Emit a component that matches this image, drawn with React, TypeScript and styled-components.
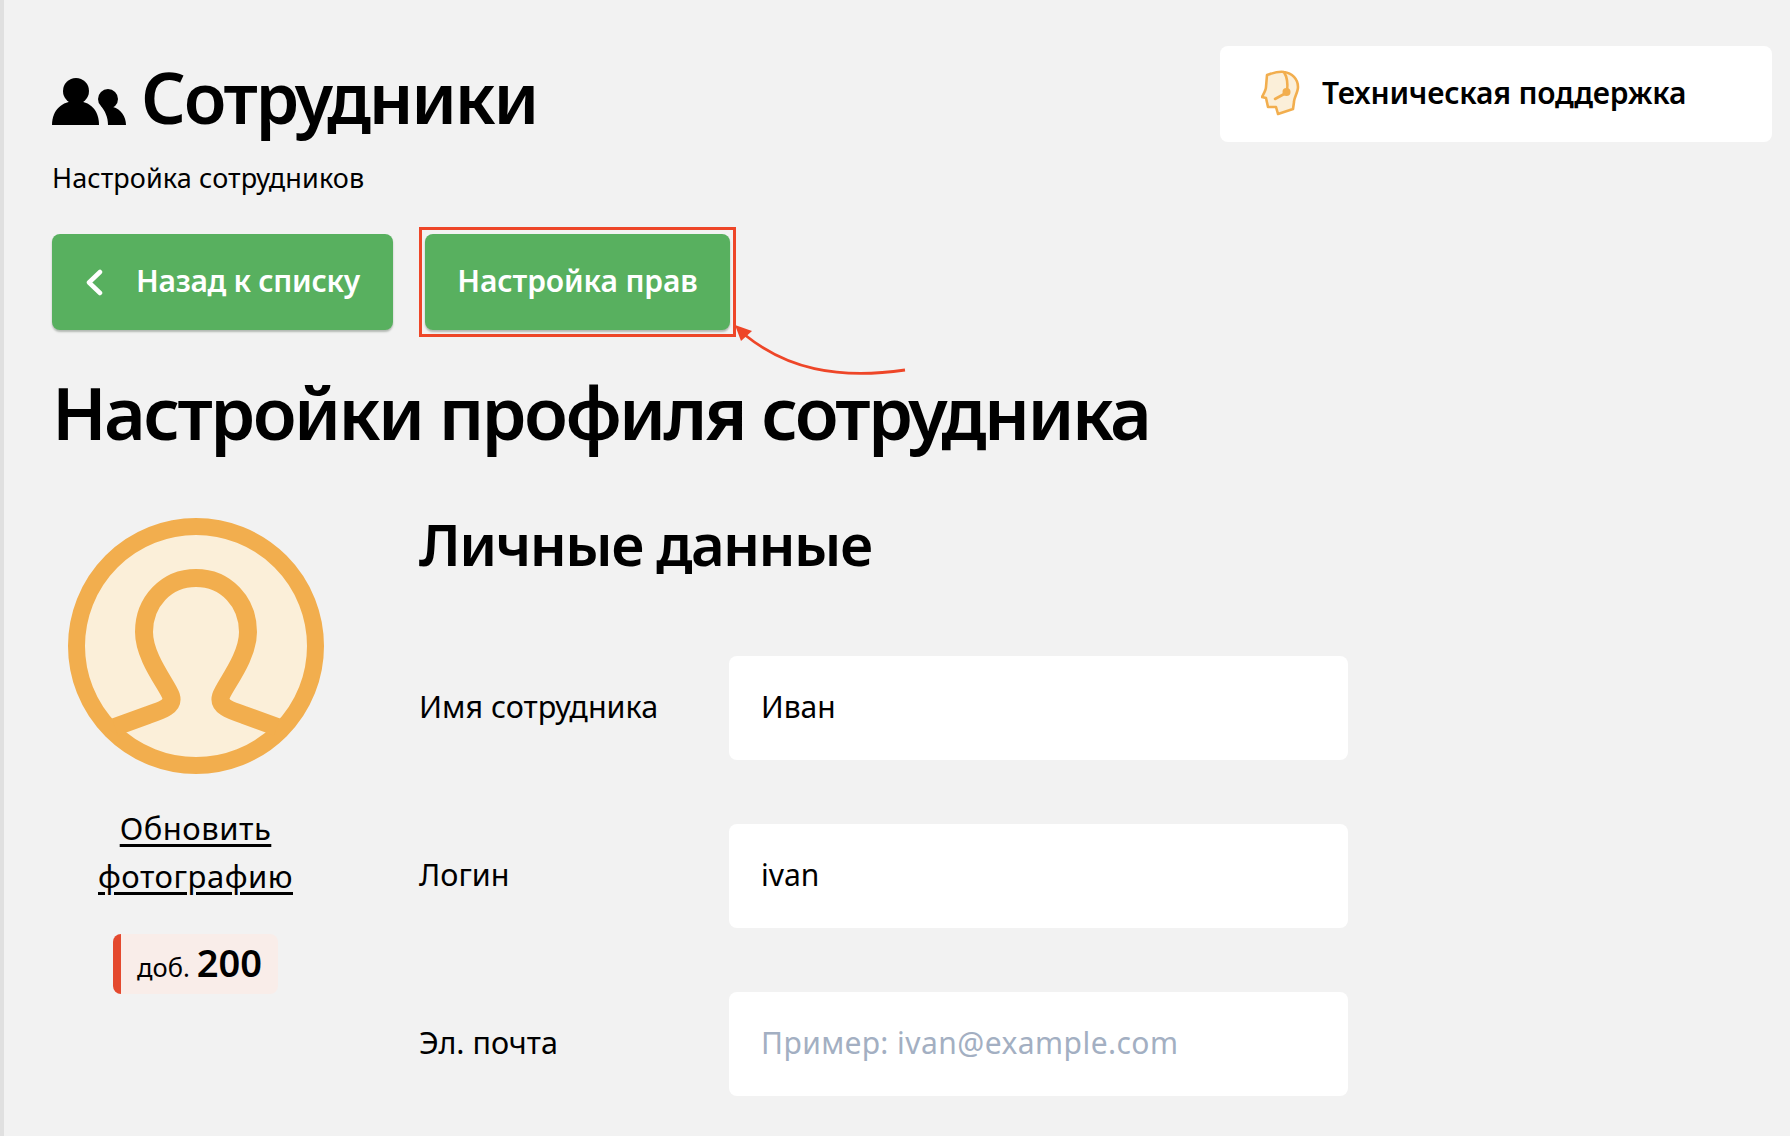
import React from 'react';
import styled, {createGlobalStyle} from 'styled-components';

const GlobalStyle = createGlobalStyle`
	html, body {
		margin:0;
		padding:0;
		background:#f2f2f2;
	}
	body {
		font-family:"Noto Sans", "Open Sans", Arial, sans-serif;
		color:#000;
	}
	* {
		box-sizing:border-box;
	}
`;

const Page = styled.div`
	height:1136px;
	overflow:hidden;
	border-left:4px solid #e0e0e0;
	padding:0 18px 0 48px;
`;

const Header = styled.header`
	display:flex;
	justify-content:space-between;
	align-items:flex-start;
`;

const TitleBlock = styled.div`
	padding-top:60px;
`;

const TitleRow = styled.div`
	display:flex;
	align-items:center;
	gap:15px;
	height:80px;
`;

const Title = styled.h2`
	margin:0;
	padding-bottom:6px;
	font-size:70px;
	font-weight:600;
	line-height:80px;
	letter-spacing:-2.3px;
`;

const Subtitle = styled.div`
	margin-top:20px;
	font-size:27px;
	line-height:36px;
	letter-spacing:0.1px;
`;

const SupportCard = styled.a`
	display:flex;
	align-items:center;
	width:552px;
	height:96px;
	margin-top:46px;
	padding-left:41px;
	gap:21px;
	background:#fff;
	border-radius:8px;
	font-size:30px;
	font-weight:600;
	letter-spacing:-0.2px;
`;

const SupportText = styled.span`
	padding-bottom:4px;
`;

const Buttons = styled.div`
	display:flex;
	gap:32px;
	margin-top:38px;
`;

const Button = styled.button<{wide?:boolean}>`
	position:relative;
	display:flex;
	align-items:center;
	height:96px;
	width:${props => props.wide ? '305px' : '341px'};
	justify-content:${props => props.wide ? 'center' : 'flex-start'};
	padding:0 ${props => props.wide ? '0' : '0 0 33px'};
	gap:33px;
	border:0;
	border-radius:8px;
	background:#58b05f;
	box-shadow:0 2px 2px #b3b9b3;
	color:#fff;
	font-family:inherit;
	font-size:30px;
	font-weight:600;
	letter-spacing:${props => props.wide ? '-0.1px' : '-0.3px'};
`;

const ButtonText = styled.span`
	padding-bottom:4px;
`;

const Highlight = styled.span`
	position:absolute;
	top:-7px;
	left:-6px;
	right:-6px;
	bottom:-7px;
	border:3px solid #ee4628;
`;

const Arrow = styled.svg`
	position:absolute;
	top:92px;
	left:306px;
	overflow:visible;
`;

const Heading = styled.h1`
	margin:37px 0 0;
	font-size:72px;
	font-weight:600;
	line-height:90px;
	letter-spacing:-2.6px;
`;

const Content = styled.div`
	display:flex;
	gap:80px;
	margin-top:48px;
`;

const AvatarColumn = styled.div`
	display:flex;
	flex-direction:column;
	align-items:center;
	width:287px;
	padding-top:13px;
`;

const PhotoLink = styled.a`
	margin-top:30px;
	width:240px;
	font-size:31px;
	line-height:48px;
	letter-spacing:0.5px;
	text-align:center;
	text-decoration:underline;
	text-underline-offset:4px;
`;

const Extension = styled.div`
	display:flex;
	align-items:baseline;
	gap:7px;
	height:60px;
	margin-top:34px;
	padding:6px 16px 0 16px;
	border-left:8px solid #e4492e;
	border-radius:8px;
	background:#f9ede9;
	font-size:25.5px;
`;

const ExtensionNumber = styled.b`
	font-size:38px;
	line-height:44px;
	font-weight:600;
`;

const Form = styled.div`
	width:929px;
`;

const FormTitle = styled.h3`
	margin:0 0 73px;
	font-size:58px;
	font-weight:600;
	line-height:78px;
	letter-spacing:-1.6px;
`;

const Rows = styled.div`
	display:flex;
	flex-direction:column;
	gap:64px;
`;

const Row = styled.label`
	display:grid;
	grid-template-columns:310px 619px;
	align-items:center;
	font-size:30.5px;
`;

const RowLabel = styled.span`
	padding-bottom:4px;
`;

const Input = styled.input`
	height:104px;
	padding:0 32px 4px;
	border:0;
	border-radius:8px;
	background:#fff;
	color:#000;
	font-family:inherit;
	font-size:30px;
	outline:none;

	&::placeholder {
		color:#a3afc2;
		opacity:1;
		letter-spacing:0.45px;
	}
`;

const PeopleIcon = () => (
	<svg width="74" height="50" viewBox="7 8 74 50">
		<circle cx="31" cy="24" r="13" fill="#000" />
		<path d="M7 58C7 43 17 34 31 34C45 34 54 43 54 58Z" fill="#000" />
		<circle cx="63" cy="32" r="10" fill="#000" />
		<path d="M63 58C63 50 60 44 56 39L68 40C76 42 81 50 81 58Z" fill="#000" />
	</svg>
);

const HeadsetIcon = () => (
	<svg width="40" height="48" viewBox="10 10 40 48" fill="none" stroke="#f2ae4e" strokeWidth="2.6" strokeLinejoin="round">
		<path d="M16 15C22 13 27 11 33 12C41 13 47 19 47 27C47 32 43 38 43 42L42 49L27 54L25 47L17 47L15 38L11 37C13 33 15 30 15 27Z" fill="#fbefd9" />
		<path d="M33 12C36 17 37 24 36 31" />
		<path d="M35 33L24 39" strokeLinecap="round" />
		<circle cx="35.5" cy="32" r="4" fill="#f2ae4e" stroke="none" />
	</svg>
);

const AvatarIcon = () => (
	<svg width="256" height="256" viewBox="0 0 256 256" fill="none" stroke="#f2ae4e" strokeWidth="17">
		<circle cx="128" cy="128" r="119.5" fill="#fbefd9" />
		<path strokeWidth="18" d="M47 209L80 197C95 192 106 188 103 178C100 168 76 140 76 114C76 84 98 60 128 60C158 60 180 84 180 114C180 140 156 168 153 178C150 188 161 192 176 197L209 209" />
	</svg>
);

const ChevronIcon = () => (
	<svg width="18" height="27" viewBox="0 0 18 27" fill="none" stroke="#fff" strokeWidth="4.5" strokeLinecap="round" strokeLinejoin="round">
		<path d="M15 3L4 13.5L15 24" />
	</svg>
);

const fields = [
	{label:'Имя сотрудника', value:'Иван'},
	{label:'Логин', value:'ivan'},
	{label:'Эл. почта', placeholder:'Пример: ivan@example.com'},
];

const App = () => (
	<Page>
		<GlobalStyle />
		<Header>
			<TitleBlock>
				<TitleRow>
					<PeopleIcon />
					<Title>Сотрудники</Title>
				</TitleRow>
				<Subtitle>Настройка сотрудников</Subtitle>
			</TitleBlock>
			<SupportCard>
				<HeadsetIcon />
				<SupportText>Техническая поддержка</SupportText>
			</SupportCard>
		</Header>
		<Buttons>
			<Button>
				<ChevronIcon />
				<ButtonText>Назад к списку</ButtonText>
			</Button>
			<Button wide>
				<ButtonText>Настройка прав</ButtonText>
				<Highlight />
				<Arrow width="170" height="50" viewBox="0 0 170 50" fill="none">
					<path d="M14 9C55 42 105 54 174 44" stroke="#ee4628" strokeWidth="2.8" />
					<path d="M4 -1L21 5L10 15Z" fill="#ee4628" />
				</Arrow>
			</Button>
		</Buttons>
		<Heading>Настройки профиля сотрудника</Heading>
		<Content>
			<AvatarColumn>
				<AvatarIcon />
				<PhotoLink>Обновить фотографию</PhotoLink>
				<Extension>
					доб.
					<ExtensionNumber>200</ExtensionNumber>
				</Extension>
			</AvatarColumn>
			<Form>
				<FormTitle>Личные данные</FormTitle>
				<Rows>
					{fields.map(field => (
						<Row key={field.label}>
							<RowLabel>{field.label}</RowLabel>
							<Input defaultValue={field.value} placeholder={field.placeholder} />
						</Row>
					))}
				</Rows>
			</Form>
		</Content>
	</Page>
);

export default App;
